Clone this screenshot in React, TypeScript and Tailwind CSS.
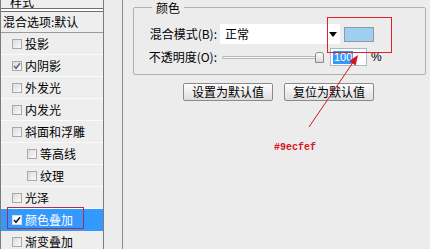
import React from 'react'

const font = { fontFamily: '"Noto Sans CJK SC", "Noto Sans", sans-serif' }

const styles = [
  { name: '投影', checked: false },
  { name: '内阴影', checked: true },
  { name: '外发光', checked: false },
  { name: '内发光', checked: false },
  { name: '斜面和浮雕', checked: false },
  { name: '等高线', checked: false, indent: true },
  { name: '纹理', checked: false, indent: true },
  { name: '光泽', checked: false },
  { name: '颜色叠加', checked: true, selected: true },
  { name: '渐变叠加', checked: false },
]

function Check({ checked, selected }: { checked: boolean; selected?: boolean }) {
  return (
    <span
      className={
        'w-[10px] h-[10px] border flex items-center justify-center shrink-0 ' +
        (selected ? 'bg-white border-[#dcdcdc]' : 'bg-gradient-to-br from-[#dcdcdc] to-[#fafafa] border-[#a9a9a9]')
      }
    >
      {checked && (
        <svg width="8" height="8" viewBox="0 0 8 8">
          <path
            d="M1 4 L3 6.2 L7 1.2"
            stroke={selected ? '#1a1a2a' : '#5a6a8a'}
            strokeWidth="1.6"
            fill="none"
          />
        </svg>
      )}
    </span>
  )
}

function Button({ children }: { children: React.ReactNode }) {
  return (
    <div className="h-[18px] px-[8px] flex items-center justify-center border border-[#8a8a8a] rounded-[2px] bg-gradient-to-b from-[#fdfdfd] to-[#dedede] text-[12px] leading-[14px] text-black">
      {children}
    </div>
  )
}

export default function App() {
  return (
    <div
      className="relative w-[430px] h-[249px] overflow-hidden bg-[#ececec] flex text-black"
      style={font}
    >
      {/* Style list */}
      <div className="w-[104px] h-full border-x border-[#7a7a7a] bg-[#eeeeee] shrink-0">
        {/* header scrolled mostly out of view */}
        <div className="h-[8px] overflow-hidden flex items-end pl-[9px]">
          <span className="text-[12px] leading-[12px] shrink-0">样式</span>
        </div>
        <div className="h-[4px] border-y border-[#6f6f6f] bg-white" />
        <div className="h-[21px] flex items-center pl-[2px] text-[12px] leading-[14px] border-b border-[#9a9a9a]">
          混合选项:默认
        </div>
        {styles.map((s) => (
          <div
            key={s.name}
            className={
              'relative h-[22px] flex items-center gap-[3px] text-[12px] leading-[14px] border-b ' +
              (s.indent ? 'pl-[26px] ' : 'pl-[11px] ') +
              (s.selected ? 'bg-[#3399ff] text-white border-[#3399ff]' : 'border-[#fbfbfb]')
            }
          >
            <Check checked={s.checked} selected={s.selected} />
            <span>{s.name}</span>
            {s.selected && (
              <div className="absolute left-[6px] top-[-2px] w-[77px] h-[22px] border border-[#a8304c]" />
            )}
          </div>
        ))}
      </div>

      <div className="w-[18px] shrink-0" />

      {/* Settings panel */}
      <div className="flex-1 h-full border-l border-[#8a8a8a] pl-[10px] pr-[4px]">
        <fieldset className="border border-[#b0b0b0] rounded-[2px] pl-[8px] pt-[9px] pb-[8px]">
          <legend className="ml-[10px] px-[4px] text-[12px] leading-[15px]">颜色</legend>
          <div className="flex items-center h-[20px]">
            <span className="w-[75px] text-right text-[12px] leading-[14px]">混合模式(B):</span>
            <div className="ml-[3px] w-[120px] h-[20px] bg-white flex items-center justify-between pl-[5px] pr-[3px] text-[12px] leading-[14px]">
              <span>正常</span>
              <svg width="8" height="5" viewBox="0 0 8 5">
                <path d="M0 0 H8 L4 5 Z" fill="#000" />
              </svg>
            </div>
            <div className="ml-[4px] w-[30px] h-[15px] bg-[#9ecfef] border border-[#8a9aa8]" />
          </div>
          <div className="flex items-center h-[18px] mt-[4px]">
            <span className="w-[75px] text-right text-[12px] leading-[14px]">不透明度(O):</span>
            <div className="relative ml-[5px] w-[102px] h-[10px] flex items-center">
              <div className="w-[96px] h-[3px] border border-[#b8b8b8] bg-[#f6f6f6] rounded-[1px]" />
              <div className="absolute right-0 top-0 w-[9px] h-[11px] border border-[#8a8a8a] rounded-t-[3px] bg-gradient-to-b from-white to-[#d8d8d8]" />
            </div>
            <div className="ml-[6px] w-[37px] h-[18px] bg-white border border-[#a9b9c9] flex items-center pl-[2px]">
              <span className="bg-[#3399ff] text-white text-[11px] leading-[13px] px-[1px]" style={{ fontFamily: '"Liberation Sans", sans-serif' }}>
                100
              </span>
            </div>
            <span className="ml-[4px] text-[12px] leading-[14px]" style={{ fontFamily: '"Liberation Sans", sans-serif' }}>
              %
            </span>
          </div>
        </fieldset>

        <div className="flex gap-[11px] pl-[50px] mt-[8px]">
          <Button>设置为默认值</Button>
          <Button>复位为默认值</Button>
        </div>

        <div
          className="mt-[41px] pl-[141px] text-[10px] leading-[12px] font-bold text-[#d8141e]"
          style={{ fontFamily: '"Liberation Mono", monospace' }}
        >
          #9ecfef
        </div>
      </div>

      {/* Annotation overlay */}
      <div className="absolute left-[327px] top-[17px] w-[65px] h-[36px] border border-[#e0202a]" />
      <svg className="absolute left-0 top-0 pointer-events-none" width="430" height="249" viewBox="0 0 430 249">
        <line x1="309" y1="127" x2="352.4" y2="63.3" stroke="#d8141e" strokeWidth="1" />
        <path d="M358 55 L355.7 65.5 L349.1 61 Z" fill="#d8141e" />
      </svg>
    </div>
  )
}
